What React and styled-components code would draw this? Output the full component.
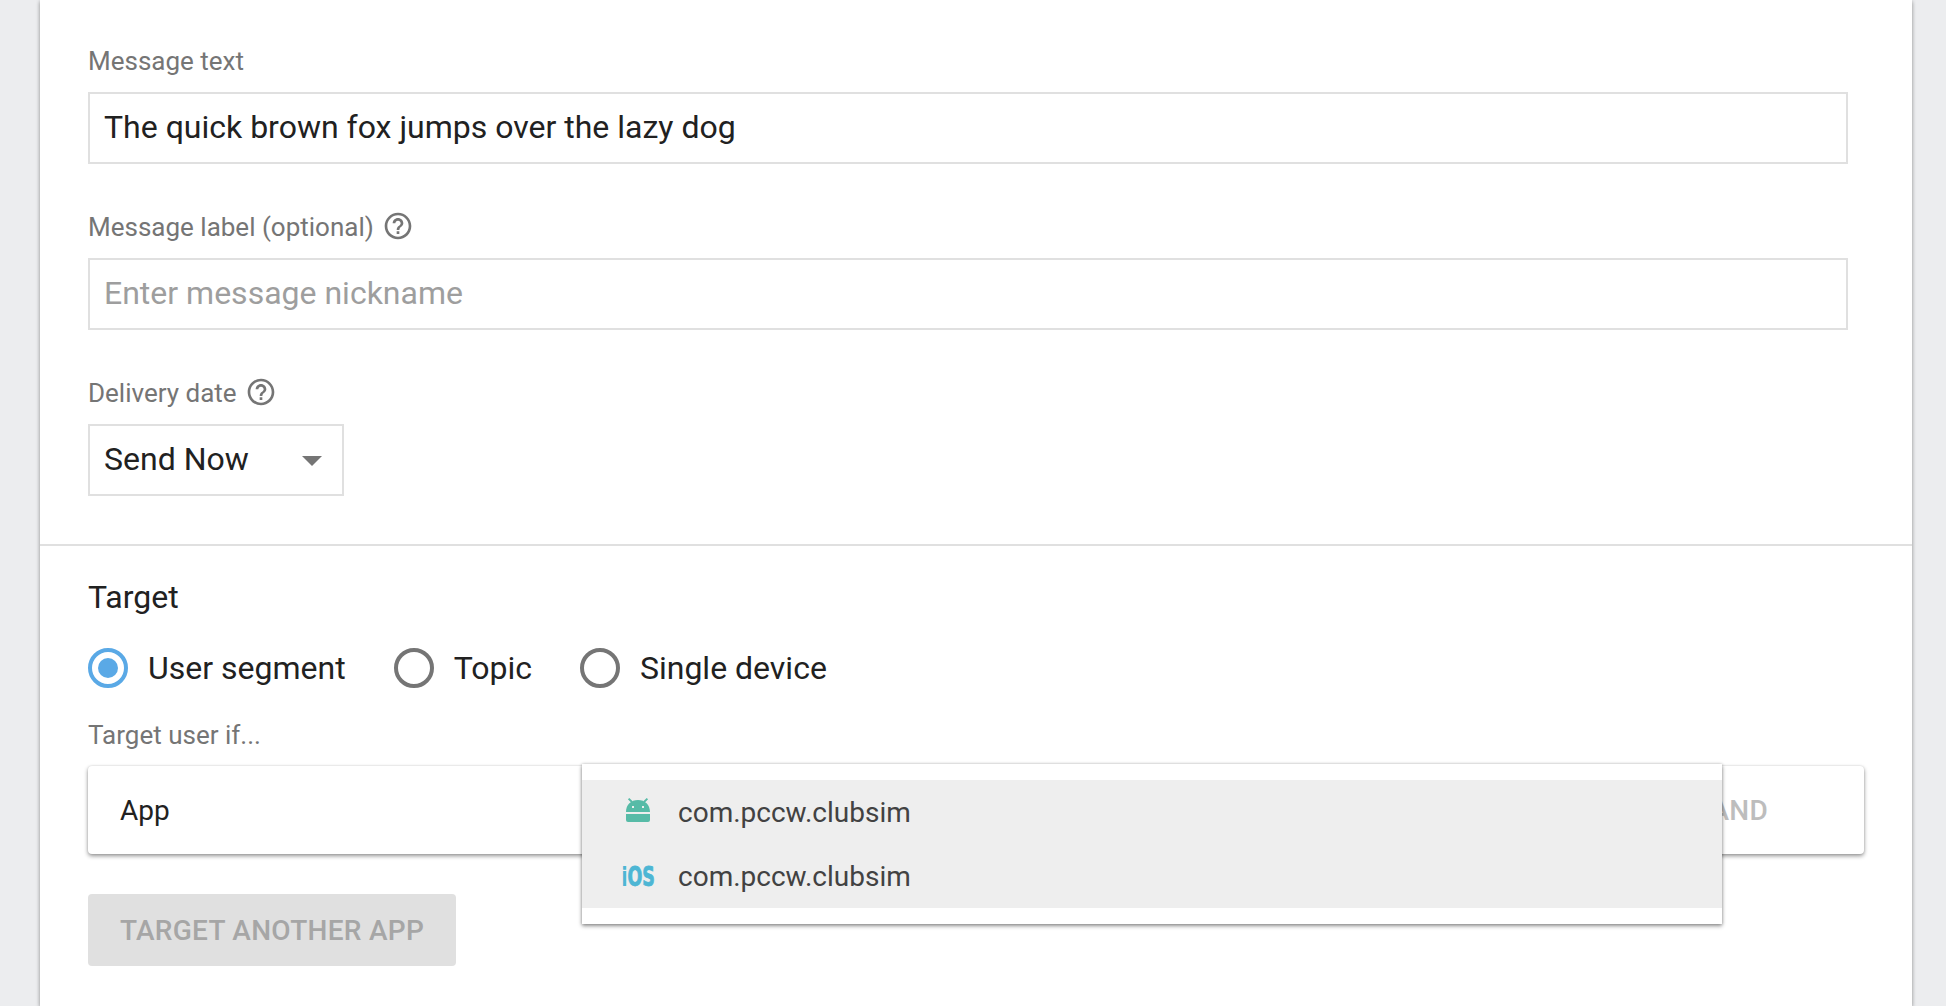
import React from "react";
import styled, { createGlobalStyle } from "styled-components";

const GlobalStyle = createGlobalStyle`
  *, *::before, *::after { box-sizing: border-box; }
  body {
    margin: 0;
    background: #ecedef;
    font-family: Roboto, "Liberation Sans", sans-serif;
    color: #212121;
    overflow: hidden;
  }
`;

const Page = styled.main`
  height: 1006px;
  padding: 0 34px 0 40px;
  overflow: hidden;
`;

const Card = styled.div`
  height: 100%;
  background: #fff;
  box-shadow: 0 2px 4px rgba(0, 0, 0, 0.3), 0 0 4px rgba(0, 0, 0, 0.14);
`;

const Section = styled.section`
  display: flex;
  flex-direction: column;
  align-items: flex-start;
  padding: ${(p) => p.$padding};
`;

const MessageSection = styled(Section)`
  gap: 46px;
  border-bottom: 2px solid #e0e0e0;
`;

const Field = styled.div`
  display: flex;
  flex-direction: column;
  gap: 14px;
  width: ${(p) => p.$width || "100%"};
`;

const Label = styled.label`
  display: flex;
  align-items: center;
  gap: 8px;
  height: 34px;
  font-size: 26px;
  line-height: 34px;
  white-space: nowrap;
  color: #757575;
`;

const HelpSvg = styled.svg`
  width: 32px;
  height: 32px;
  flex: none;
  margin-bottom: 2px;
  fill: #757575;
`;

const TextInput = styled.input`
  width: 100%;
  height: 72px;
  padding: 0 14px 2px;
  border: 2px solid #e0e0e0;
  border-radius: 0;
  background: #fff;
  font: 400 32px Roboto, "Liberation Sans", sans-serif;
  color: #212121;
  outline: none;

  &::placeholder {
    color: #9e9e9e;
    opacity: 1;
  }
`;

const Select = styled.div`
  display: flex;
  align-items: center;
  justify-content: space-between;
  width: 100%;
  height: 72px;
  padding: 0 20px 2px 14px;
  border: 2px solid #e0e0e0;
  font-size: 32px;
`;

const Caret = styled.span`
  width: 0;
  height: 0;
  margin-top: 4px;
  border: 10px solid transparent;
  border-top-color: #757575;
  border-bottom-width: 0;
`;

const Heading = styled.h2`
  margin: 0 0 32px;
  font-size: 32px;
  font-weight: 400;
  line-height: 38px;
`;

const RadioGroup = styled.div`
  display: flex;
  gap: 48px;
  margin-bottom: 30px;
`;

const RadioOption = styled.div`
  display: flex;
  align-items: center;
  gap: 20px;
  height: 40px;
  font-size: 32px;
  line-height: 42px;
  white-space: nowrap;
`;

const RadioMark = styled.span`
  display: grid;
  place-items: center;
  width: 40px;
  height: 40px;
  flex: none;
  border: 4px solid ${(p) => (p.$checked ? "#5aa9e6" : "#757575")};
  border-radius: 50%;

  &::after {
    content: "";
    width: 20px;
    height: 20px;
    border-radius: 50%;
    background: ${(p) => (p.$checked ? "#5aa9e6" : "transparent")};
  }
`;

const Condition = styled.div`
  position: relative;
  display: flex;
  align-items: center;
  justify-content: space-between;
  width: 1776px;
  height: 88px;
  margin: 14px 0 40px;
  padding: 0 96px 0 32px;
  border-radius: 4px;
  background: #fff;
  box-shadow: 0 2px 4px rgba(0, 0, 0, 0.42), 0 0 2px rgba(0, 0, 0, 0.12);
  font-size: 28px;
`;

const AndButton = styled.span`
  font-weight: 500;
  letter-spacing: 0.28px;
  color: #bdbdbd;
`;

const Menu = styled.ul`
  position: absolute;
  top: -2px;
  left: 494px;
  width: 1140px;
  margin: 0;
  padding: 16px 0;
  list-style: none;
  background: #fff;
  box-shadow: 0 2px 4px rgba(0, 0, 0, 0.42), 0 0 3px rgba(0, 0, 0, 0.2);
`;

const MenuItem = styled.li`
  display: flex;
  align-items: center;
  gap: 24px;
  height: 64px;
  padding: 0 40px;
  background: #eeeeee;
  color: #424242;
`;

const IconSlot = styled.span`
  display: flex;
  justify-content: center;
  align-items: center;
  width: 32px;
  height: 64px;
  flex: none;
`;

const AndroidSvg = styled.svg`
  width: 24px;
  height: 24px;
  margin-bottom: 4px;
  fill: #57bba7;
`;

const IosMark = styled.span`
  margin-top: 1px;
  font: 700 27px/30px "DejaVu Sans Condensed", "DejaVu Sans", sans-serif;
  font-stretch: condensed;
  transform: scaleX(0.72);
  color: #4db6d4;
`;

const IosHeavy = styled.span`
  -webkit-text-stroke: 0.8px #4db6d4;
`;

const TargetButton = styled.button`
  height: 72px;
  width: 368px;
  padding: 0;
  border: 0;
  border-radius: 4px;
  background: #e0e0e0;
  font: 500 28px Roboto, "Liberation Sans", sans-serif;
  letter-spacing: 0.28px;
  white-space: nowrap;
  color: #a6a6a6;
`;

function HelpIcon() {
  return (
    <HelpSvg viewBox="0 0 24 24" aria-hidden="true">
      <path d="M11 18h2v-2h-2v2zm1-16C6.48 2 2 6.48 2 12s4.48 10 10 10 10-4.48 10-10S17.52 2 12 2zm0 18c-4.41 0-8-3.59-8-8s3.59-8 8-8 8 3.59 8 8-3.59 8-8 8zm0-14c-2.21 0-4 1.79-4 4h2c0-1.1.9-2 2-2s2 .9 2 2c0 2-3 1.75-3 5h2c0-2.25 3-2.5 3-5 0-2.21-1.79-4-4-4z" />
    </HelpSvg>
  );
}

function AndroidIcon() {
  return (
    <AndroidSvg viewBox="0 0 24 24" aria-hidden="true" overflow="visible">
      <path
        fillRule="evenodd"
        d="M0 14C0 6.8 5 2 12 2s12 4.800 12 12zM6 8v2h2v-2zM16 8v2h2v-2z"
      />
      <path d="M0 16h24v6a2 2 0 0 1-2 2H2a2 2 0 0 1-2-2z" />
      <path d="M2.600.6 6 4M21.400.6 18 4" stroke="#57bba7" strokeWidth="1.900" />
    </AndroidSvg>
  );
}

const targets = [
  { name: "User segment", checked: true },
  { name: "Topic", checked: false },
  { name: "Single device", checked: false },
];

export default function App() {
  return (
    <>
      <GlobalStyle />
      <Page>
        <Card>
          <MessageSection $padding="44px 64px 48px 48px">
            <Field>
              <Label>Message text</Label>
              <TextInput defaultValue="The quick brown fox jumps over the lazy dog" spellCheck={false} />
            </Field>
            <Field>
              <Label>
                Message label (optional)
                <HelpIcon />
              </Label>
              <TextInput placeholder="Enter message nickname" />
            </Field>
            <Field $width="256px">
              <Label>
                Delivery date
                <HelpIcon />
              </Label>
              <Select>
                Send Now
                <Caret />
              </Select>
            </Field>
          </MessageSection>
          <Section $padding="32px 48px">
            <Heading>Target</Heading>
            <RadioGroup>
              {targets.map((t) => (
                <RadioOption key={t.name}>
                  <RadioMark $checked={t.checked} />
                  {t.name}
                </RadioOption>
              ))}
            </RadioGroup>
            <Label>Target user if...</Label>
            <Condition>
              <span>App</span>
              <AndButton>AND</AndButton>
              <Menu>
                <MenuItem>
                  <IconSlot>
                    <AndroidIcon />
                  </IconSlot>
                  com.pccw.clubsim
                </MenuItem>
                <MenuItem>
                  <IconSlot>
                    <IosMark>
                      i<IosHeavy>OS</IosHeavy>
                    </IosMark>
                  </IconSlot>
                  com.pccw.clubsim
                </MenuItem>
              </Menu>
            </Condition>
            <TargetButton>TARGET ANOTHER APP</TargetButton>
          </Section>
        </Card>
      </Page>
    </>
  );
}
